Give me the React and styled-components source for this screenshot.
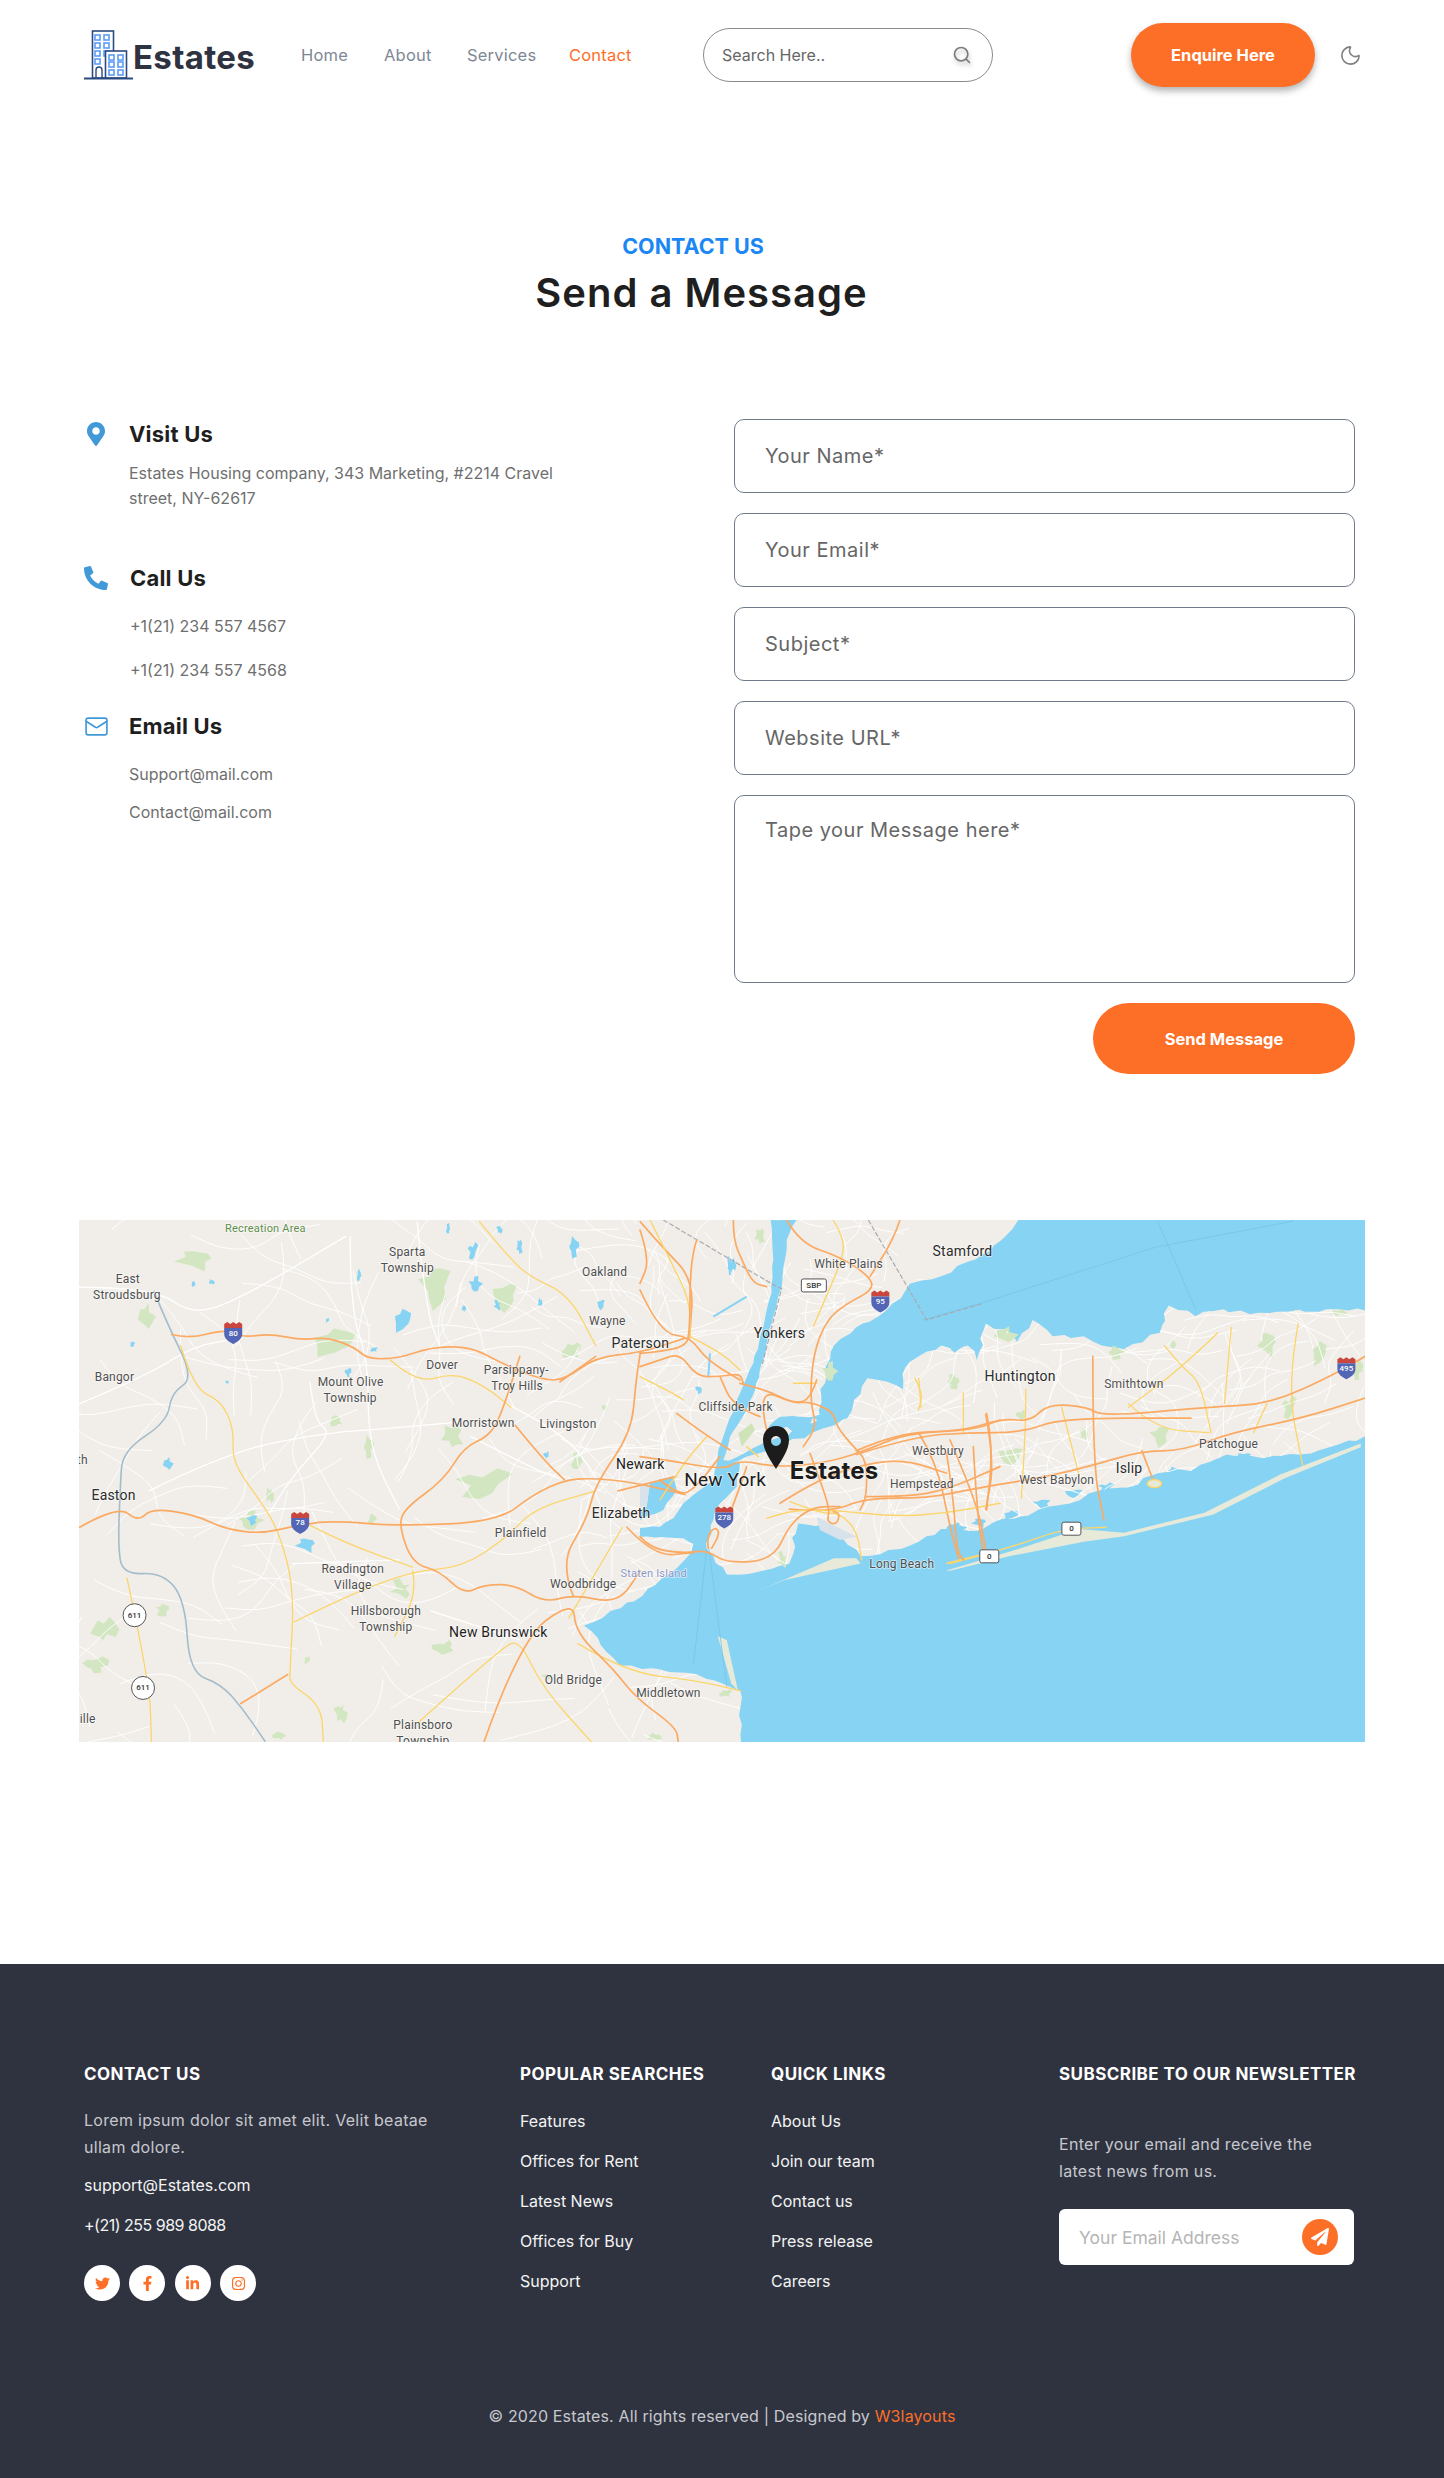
import styled, { createGlobalStyle } from "styled-components";
import { FaFacebookF, FaInstagram, FaLinkedinIn, FaMapMarkerAlt, FaPaperPlane, FaPhoneAlt, FaTwitter } from "react-icons/fa";
import { Mail, Moon, Search } from "lucide-react";

const ORANGE = "#fd6e27";
const LAND = "#f1eee9";
const WATER = "#86d3f4";
const GREEN = "#d3e6c2";
const ROAD_ORANGE = "#fbaa63";
const ROAD_YELLOW = "#fbd56c";

// map drawing: coordinates read off crops of the map (west half, east half, centre)
const WEST = "translate(-19 -20) scale(0.4464 0.3636)";
const EAST = "translate(621 -20) scale(0.4464 0.3636)";
const CENTRE = "translate(561 0) scale(0.3333)";
const fromWest = (x, y) => [x * 0.4464 - 19, y * 0.3636 - 20];
const fromEast = (x, y) => [x * 0.4464 + 621, y * 0.3636 - 20];

const noise = (i) => {
  const v = Math.sin(i * 12.9898 + 4.1) * 43758.5453;
  return (v - Math.floor(v)) * 2 - 1;
};
const points = (d) => d.match(/-?\d+,-?\d+/g).map((s) => s.split(",").map(Number));

// a road: round the corners of a polyline
const smooth = (d) => {
  const p = points(d);
  let out = `M${p[0]}`;
  for (let i = 1; i < p.length - 1; i++) {
    out += ` Q${p[i]} ${(p[i][0] + p[i + 1][0]) / 2},${(p[i][1] + p[i + 1][1]) / 2}`;
  }
  return out + ` L${p[p.length - 1]}`;
};

// a coast: break long sides into small uneven bits
const coast = (d, amp = 7, seed = 1) => {
  const p = points(d);
  let out = "";
  let k = seed * 100;
  p.forEach((a, i) => {
    const b = p[(i + 1) % p.length];
    const n = Math.max(1, Math.round(Math.hypot(b[0] - a[0], b[1] - a[1]) / 22));
    for (let j = 0; j < n; j++) {
      k += 1;
      const off = j === 0 ? 0 : amp;
      const x = a[0] + ((b[0] - a[0]) * j) / n + noise(k) * off;
      const y = a[1] + ((b[1] - a[1]) * j) / n + noise(k + 0.5) * off;
      out += `${out ? "L" : "M"}${x.toFixed(1)},${y.toFixed(1)} `;
    }
  });
  return out + "Z";
};

const blob = ([cx, cy, rx, ry], seed) => {
  let out = "";
  for (let i = 0; i < 11; i++) {
    const t = (i / 11) * Math.PI * 2;
    const r = 0.72 + 0.42 * noise(seed * 7 + i);
    const x = cx + Math.cos(t) * rx * r;
    const y = cy + Math.sin(t) * ry * r;
    out += `${i ? "L" : "M"}${x.toFixed(1)},${y.toFixed(1)} `;
  }
  return out + "Z";
};

const minorRoads = (count, [x0, y0, x1, y1], seed, step = 80) => {
  const list = [];
  for (let i = 0; i < count; i++) {
    let x = x0 + ((noise(seed + i * 3) + 1) / 2) * (x1 - x0);
    let y = y0 + ((noise(seed + i * 5 + 1) + 1) / 2) * (y1 - y0);
    let heading = noise(seed + i * 7 + 2) * Math.PI;
    let d = `M${Math.round(x)},${Math.round(y)}`;
    for (let s = 0; s < 4; s++) {
      heading += noise(seed + i + s * 11) * 0.8;
      x += Math.cos(heading) * step;
      y += Math.sin(heading) * step;
      d += ` L${Math.round(x)},${Math.round(y)}`;
    }
    list.push(d);
  }
  return list;
};

const waterShape = coast(
  "M760,-20 L1580,-20 L1580,1580 L90,1580 L90,1350 L-30,1300 L-130,1290 L-180,1280 L-260,1170 L-200,1130 L-130,1090 L-50,1010 L-20,970 L0,900 L10,830 L40,790 L60,720 L270,600 L270,520 L300,400 L350,350 L400,320 L450,270 L470,230 L540,210 L600,170 L650,140 L700,80",
  5,
  2
);
const longIsland = coast(
  "M30,880 L50,790 L65,720 L150,690 L250,640 L300,620 L330,600 L345,550 L375,490 L420,500 L455,520 L460,460 L490,430 L540,400 L570,420 L600,400 L620,440 L640,340 L700,370 L710,390 L745,330 L790,375 L860,375 L900,400 L950,410 L1030,365 L1050,290 L1110,320 L1150,305 L1250,310 L1580,300 L1580,620 L1410,680 L1340,700 L1260,710 L1180,700 L1100,745 L1030,750 L960,790 L890,800 L800,840 L720,870 L660,885 L620,910 L540,905 L450,960 L360,980 L300,900 L220,890 L200,1000 L140,1020 L60,1030 L30,980 L15,960",
  6,
  3
);
const barrierIslands = [
  "M130,1075 L300,985 L350,985 L360,1000 L190,1045 Z",
  "M550,1020 L700,965 L850,905 L950,915 L1130,860 L1300,755 L1480,670 L1480,680 L1310,765 L1150,865 L950,925 L860,940 L700,978 L560,1020 Z",
  "M40,1200 L60,1210 L85,1350 L70,1330 Z",
];
const centreWater = [
  "M392,0 L470,0 L440,60 L425,200 L395,310 L365,430 L345,510 L320,570 L270,650 L250,720 L300,725 L290,800 L240,850 L215,880 L205,950 L175,1000 L200,1080 L130,1080 L190,990 L130,955 L0,950 L0,925 L60,920 L100,895 L130,850 L180,810 L222,780 L235,690 L260,620 L300,520 L340,430 L370,320 L395,220 L400,120 Z",
  "M385,620 L420,590 L480,590 L520,590 L500,640 L470,640 L440,620 L400,640 Z",
  "M520,590 L575,575 L590,600 L540,610 Z",
  "M30,790 L100,770 L110,810 L70,870 L0,900 L0,870 L20,860 Z",
];
const southBays = [
  [570, 900, 26, 16], [625, 885, 24, 18], [700, 865, 22, 16], [765, 835, 24, 16], [840, 805, 22, 14], [910, 790, 20, 14], [1060, 745, 20, 10], [1220, 705, 20, 10],
];

const westOrange = [
  "M250,370 L290,382 L370,355 L410,378 L470,368 L540,385 L600,378 L660,405 L690,438 L760,435 L830,405 L920,403 L990,450 L1080,495 L1130,495 L1200,432 L1300,420 L1400,380",
  "M44,900 L130,840 L175,885 L205,848 L300,865 L370,905 L450,918 L530,895 L610,882 L760,897 L980,885 L1060,810 L1130,770 L1190,765 L1280,775 L1400,810",
  "M1030,430 L990,590 L960,650 L905,680 L860,770 L770,850 L760,900 L790,1000 L850,1020 L905,1085 L950,1058 L1020,1058 L1085,1108 L1150,1085 L1250,1110 L1300,1020",
  "M1150,1090 L1120,1000 L1180,880 L1200,780 L1280,640 L1290,500 L1300,420",
  "M950,1490 L1030,1210 L1150,1100 L1155,1190 L1240,1290 L1290,1370 L1380,1450 L1385,1490",
  "M1020,620 L1080,710 L1130,770",
  "M405,1385 L510,1305",
  "M1300,60 L1350,130 L1420,220 L1410,380",
  "M1250,800 L1380,760",
  "M1270,900 L1330,980 L1420,970",
  "M1120,500 L1200,430",
];
const westYellow = [
  "M270,400 L300,520 L360,550 L390,630 L385,720 L450,830 L490,910 L525,1070 L515,1300 L515,1330 L585,1390 L590,1490",
  "M525,1160 L640,1090 L790,1020 L900,1010 L1000,930 L1060,850 L1200,800",
  "M740,440 L800,505 L880,475 L950,510 L1010,570",
  "M560,895 L640,945 L790,1010",
  "M790,1020 L800,1080 L750,1200",
  "M940,60 L1000,150 L1050,210 L1140,260 L1200,400",
  "M800,1440 L990,1230 L1030,1210 L1080,1340 L1190,1490",
  "M150,1040 L200,1320 L205,1490",
  "M1140,1150 L1260,900",
  "M1160,1220 L1270,1300 L1420,1320 L1525,1350",
];
const westWhite = [
  "M44,240 L210,240 L300,320 L420,260 L640,100",
  "M44,560 L200,480 L300,400 L410,380",
  "M200,800 L380,690 L600,640 L720,630 L900,610",
  "M650,100 L650,300 L690,440 L690,620 L710,730 L760,850",
  "M560,500 L570,610 L610,640 L520,760 L470,860",
  "M800,60 L820,300 L850,400",
  "M920,650 L1060,740 L1130,770",
  "M1000,560 L1130,640 L1200,760",
  "M520,1000 L760,990",
  "M830,1130 L1030,1210",
];
const eastOrange = [
  "M350,690 L440,640 L590,635 L680,600 L740,610 L780,560 L870,570 L900,595 L1140,570 L1280,560 L1420,480 L1490,430",
  "M350,700 L480,650 L600,640 L720,640 L810,600 L1100,600",
  "M200,850 L290,860 L370,820 L510,820 L610,795 L780,760 L880,730 L990,690 L1080,690 L1190,640 L1350,600 L1490,545",
  "M880,430 L880,730 L905,880",
  "M640,590 L660,720 L640,850",
  "M490,640 L530,720 L560,900 L580,990",
  "M560,660 L620,830 L640,960",
  "M990,690 L1015,770",
];
const eastYellow = [
  "M590,530 L590,640",
  "M490,490 L495,570",
  "M730,520 L730,620 L720,820",
  "M810,570 L850,760",
  "M1040,400 L1080,460 L1120,500 L1145,640",
  "M1190,350 L1175,560",
  "M1340,340 L1315,510 L1350,730",
  "M960,560 L1020,630 L1140,640",
  "M1160,365 L1080,460 L960,570",
  "M1240,640 L1270,560",
  "M560,1000 L700,955 L810,905 L910,900",
];
const centreOrange = [
  "M170,60 L150,120 L150,350 L130,380 L60,395 L0,400",
  "M0,210 L60,340 L150,350 L200,420 L300,480",
  "M280,0 L280,60 L310,130 L340,190 L380,200",
  "M440,0 L480,70 L600,110 L690,170 L700,210 L620,250 L560,300 L520,400 L510,540 L530,620 L490,680",
  "M780,0 L760,60 L690,170",
  "M300,490 L380,510 L460,550 L510,545 L580,575 L590,620 L640,680 L680,720 L680,830 L660,870",
  "M0,440 L60,420 L120,400 L170,470 L240,470 L300,460 L310,490",
  "M110,580 L190,640 L270,690",
  "M0,710 L80,720 L250,750 L300,720 L400,740 L500,735 L590,720 L680,690 L800,640 L1000,630 L1080,600",
  "M60,780 L120,830 L170,800 L240,710",
  "M530,480 L510,540 L460,550 L370,510 L370,600 L400,690",
  "M510,700 L540,780 L570,870 L560,905 L590,915 L600,880 L580,875",
  "M0,950 L30,985 L130,1000 L200,990 L260,1030 L400,1020 L450,910 L520,860 L600,860",
  "M270,880 L300,800 L320,740",
  "M205,985 L200,950 L225,920 L240,940 L215,985",
  "M420,850 L530,780 L680,730 L800,720 L920,760",
  "M680,830 L800,830 L920,810 L1080,740",
  "M920,700 L940,830 L950,990 L970,1020",
  "M1040,580 L1060,680 L1040,870",
  "M1000,680 L1010,860 L1030,1000",
  "M0,30 L30,120 L0,190",
  "M360,590 L280,560 L240,470",
];
const centreYellow = [
  "M380,895 L450,870 L580,870 L760,890 L920,880 L1080,850",
  "M450,845 L540,880 L600,880 L650,930 L665,1020",
  "M150,350 L240,395 L300,450",
  "M30,0 L90,120 L150,240 L150,350",
  "M580,0 L610,50 L610,110 L550,250 L520,320",
  "M825,475 L850,520 L835,570",
  "M460,490 L530,490",
  "M920,1030 L1020,1005",
  "M0,470 L100,520 L130,540",
  "M320,680 L355,710",
  "M60,840 L130,730 L200,650",
];
const centreBlueLines = ["M220,290 L270,260 L320,230", "M265,110 L270,165", "M210,400 L205,470"];
const westGreen = [
  [190, 320, 22, 40], [300, 160, 60, 40], [620, 390, 60, 50], [840, 240, 40, 80], [1000, 260, 30, 50],
  [950, 780, 70, 45], [690, 680, 18, 30], [880, 650, 25, 35], [425, 880, 30, 30], [765, 1070, 28, 30],
  [100, 1180, 30, 40], [80, 1280, 35, 25], [230, 1125, 18, 20], [860, 1230, 35, 25], [1150, 410, 30, 30],
  [1160, 720, 18, 30], [630, 1410, 16, 35], [490, 1475, 25, 14], [1330, 1475, 25, 14], [620, 610, 20, 18],
  [470, 810, 10, 30], [700, 880, 10, 16], [1090, 1310, 14, 10], [555, 1265, 10, 14], [1220, 570, 8, 14],
];
const eastGreen = [
  [680, 370, 30, 25], [1270, 390, 30, 50], [1390, 420, 20, 45], [1030, 650, 25, 40], [700, 700, 30, 30],
  [1320, 570, 18, 35], [930, 420, 30, 18], [135, 100, 12, 25], [290, 470, 18, 30], [185, 990, 14, 25],
  [1430, 310, 18, 12], [1470, 470, 18, 30], [570, 500, 14, 20], [720, 590, 16, 18], [60, 1355, 20, 14],
  [565, 495, 12, 18], [860, 640, 10, 24], [1060, 400, 10, 18],
];
const westLakes = [
  [240, 725, 13, 20], [550, 945, 32, 28], [770, 330, 24, 42], [430, 880, 14, 20], [1213, 285, 9, 18],
  [925, 140, 13, 26], [1150, 130, 18, 28], [1030, 130, 7, 24], [930, 230, 16, 24], [980, 290, 10, 16],
  [1505, 180, 9, 26], [645, 475, 9, 14], [162, 395, 7, 8], [1090, 700, 9, 12], [705, 410, 11, 9],
  [870, 80, 6, 18], [985, 80, 7, 16], [905, 300, 8, 12], [1075, 280, 8, 16], [300, 232, 7, 9], [340, 225, 7, 10],
  [670, 210, 5, 20], [1430, 520, 8, 16], [600, 330, 6, 8], [375, 500, 5, 8],
];
const labelsWest = [
  ["Recreation Area", 460, 78, 11, "#5f8f4e"], ["Sparta", 778, 143, 12], ["Township", 778, 186, 12],
  ["East", 152, 218, 12], ["Stroudsburg", 150, 262, 12], ["Oakland", 1220, 198, 12], ["Wayne", 1226, 333, 12],
  ["Paterson", 1300, 393, 14, "#2b2b2b"], ["Bangor", 122, 488, 12], ["Dover", 856, 453, 12],
  ["Parsippany-", 1022, 468, 12], ["Troy Hills", 1024, 511, 12], ["Mount Olive", 651, 501, 12],
  ["Township", 650, 545, 12], ["Morristown", 948, 614, 12], ["Livingston", 1138, 617, 12],
  ["Newark", 1300, 727, 14, "#222"], ["New York", 1490, 770, 19, "#1d1d1d"], ["Easton", 120, 810, 14, "#2b2b2b"],
  ["Elizabeth", 1257, 860, 14, "#2b2b2b"], ["Plainfield", 1032, 915, 12], ["Readington", 656, 1014, 12],
  ["Village", 656, 1058, 12], ["Hillsborough", 730, 1130, 12], ["Township", 730, 1174, 12],
  ["Staten Island", 1330, 1028, 11, "#8b98c6"], ["Woodbridge", 1172, 1056, 12],
  ["New Brunswick", 982, 1187, 14, "#1f1f1f"], ["Old Bridge", 1150, 1320, 12], ["Middletown", 1363, 1356, 12],
  ["Plainsboro", 813, 1445, 12], ["Township", 813, 1488, 12], ["ille", 62, 1428, 12], ["th", 50, 715, 12],
];
const labelsEast = [
  ["Stamford", 588, 140, 14, "#2b2b2b"], ["White Plains", 333, 176, 12], ["Yonkers", 178, 366, 14, "#2b2b2b"],
  ["Huntington", 717, 484, 14, "#2b2b2b"], ["Smithtown", 972, 505, 12], ["Cliffside Park", 80, 568, 12],
  ["Westbury", 533, 690, 12], ["Hempstead", 497, 781, 12], ["West Babylon", 799, 770, 12],
  ["Islip", 961, 738, 14, "#2b2b2b"], ["Patchogue", 1184, 672, 12], ["Long Beach", 452, 1000, 12],
];
const interstates = [
  ["80", ...fromWest(388, 366)], ["78", ...fromWest(538, 888)], ["278", ...fromWest(1488, 873)],
  ["95", ...fromEast(404, 279)], ["495", ...fromEast(1448, 463)],
];
const plates = [["SBP", ...fromEast(255, 235), 25], ["0", ...fromEast(648, 980), 19], ["0", ...fromEast(832, 904), 19]];
const circles = [fromWest(167, 1142), fromWest(186, 1342)];

const footerLinks = {
  popular: ["Features", "Offices for Rent", "Latest News", "Offices for Buy", "Support"],
  quick: ["About Us", "Join our team", "Contact us", "Press release", "Careers"],
};

const GlobalStyle = createGlobalStyle`
  html, body {
    margin: 0;
    padding: 0;
    background: #fff;
    font-family: Inter, "Liberation Sans", sans-serif;
  }
  * {
    box-sizing: border-box;
  }
`;

const Page = styled.div`
  width: 1444px;
`;

const Header = styled.header`
  height: 110px;
  display: flex;
  align-items: center;
  padding: 0 82px 0 84px;
`;

const Brand = styled.a`
  width: 217px;
  display: flex;
  align-items: center;
  height: 50px;
`;

const BrandName = styled.span`
  font-size: 33px;
  font-weight: 700;
  color: #2f3341;
  letter-spacing: 0.3px;
  margin: 4px 0 0 -1px;
`;

const Nav = styled.nav`
  width: 402px;
  display: grid;
  grid-template-columns: 83px 83px 102px auto;
`;

const NavLink = styled.a`
  font-size: 16.5px;
  letter-spacing: 0.2px;
  color: ${(p) => (p.$active ? ORANGE : "#7e8794")};
`;

const SearchBox = styled.div`
  width: 290px;
  height: 54px;
  border: 1px solid #8b8b8b;
  border-radius: 27px;
  display: flex;
  align-items: center;
  justify-content: space-between;
  padding: 0 20px 0 18px;
  color: #666;
  font-size: 16px;

  svg {
    filter: drop-shadow(1px 3px 2px rgba(0, 0, 0, 0.25));
  }
`;

const EnquireBtn = styled.a`
  width: 184px;
  height: 64px;
  margin-left: 138px;
  background: ${ORANGE};
  border-radius: 32px;
  color: #fff;
  font-size: 16.5px;
  font-weight: 700;
  display: flex;
  align-items: center;
  justify-content: center;
  box-shadow: 0 4px 7px rgba(0, 0, 0, 0.3);
`;

const ThemeIcon = styled.span`
  margin-left: 24px;
  display: flex;
  color: #808080;
`;

const TitleBlock = styled.div`
  padding: 121px 125px 0 84px;
  text-align: center;
`;

const Eyebrow = styled.div`
  font-size: 21.5px;
  line-height: 30px;
  font-weight: 700;
  color: #1a87f5;
  margin-right: 17px;
`;

const Title = styled.h1`
  margin: 7px 0 0;
  font-size: 40px;
  line-height: 50px;
  font-weight: 600;
  color: #1f1f1f;
  letter-spacing: 1px;
`;

const ContactGrid = styled.section`
  display: grid;
  grid-template-columns: 650px 621px;
  padding: 0 0 0 84px;
  margin-top: 101px;
`;

const InfoBlock = styled.div`
  display: grid;
  grid-template-columns: 45px 1fr;
  margin-bottom: ${(p) => p.$gap}px;
`;

const InfoIcon = styled.div`
  height: 30px;
  display: flex;
  align-items: center;
  color: #4299d8;
`;

const InfoBody = styled.div`
  padding-left: ${(p) => p.$shift || 0}px;
`;

const InfoTitle = styled.h3`
  margin: 0;
  font-size: 22px;
  line-height: 30px;
  font-weight: 700;
  letter-spacing: 0.2px;
  color: #1f1f1f;
`;

const InfoText = styled.p`
  margin: ${(p) => p.$top}px 0 0;
  max-width: 450px;
  font-size: 16px;
  line-height: ${(p) => p.$line || 24}px;
  color: #6f6f6f;
`;

const Form = styled.form`
  display: flex;
  flex-direction: column;
  gap: 20px;
`;

const Field = styled.input`
  height: 74px;
  border: 1px solid #6f7b8c;
  border-radius: 10px;
  padding: 0 30px;
  font: 20px Inter, sans-serif;
  letter-spacing: 0.5px;
  outline: none;

  &::placeholder {
    color: #666;
    opacity: 1;
  }
`;

const MessageField = styled.textarea`
  height: 188px;
  border: 1px solid #6f7b8c;
  border-radius: 10px;
  padding: 22px 30px;
  font: 20px/24px Inter, sans-serif;
  letter-spacing: 0.5px;
  resize: none;
  outline: none;

  &::placeholder {
    color: #666;
    opacity: 1;
  }
`;

const SendBtn = styled.button`
  align-self: flex-end;
  width: 262px;
  height: 71px;
  border: none;
  border-radius: 36px;
  background: ${ORANGE};
  color: #fff;
  font: 700 16.5px Inter, sans-serif;
`;

const MapFrame = styled.section`
  margin: 146px 79px 0;
  height: 522px;
  background: ${LAND};
  overflow: hidden;

  svg {
    display: block;
  }
`;

const MapLabel = styled.text`
  font-family: Roboto, sans-serif;
  text-anchor: middle;
  dominant-baseline: central;
  letter-spacing: 0.2px;
  paint-order: stroke;
  stroke: rgba(255, 255, 255, 0.6);
  stroke-width: 1.5px;
`;

const PinLabel = styled(MapLabel)`
  font-family: Inter, sans-serif;
  font-size: 24px;
  font-weight: 700;
`;

const ShieldNumber = styled.text`
  font-family: Roboto, sans-serif;
  font-size: 8px;
  font-weight: 500;
  text-anchor: middle;
  dominant-baseline: central;
`;

const Footer = styled.footer`
  margin-top: 222px;
  height: 514px;
  background: #2f3340;
  padding: 97px 0 0 84px;
`;

const FooterGrid = styled.div`
  display: grid;
  grid-template-columns: 436px 251px 288px 295px;
  height: 240px;
`;

const FooterTitle = styled.h4`
  margin: 0;
  font-size: 17px;
  line-height: 26px;
  font-weight: 700;
  letter-spacing: 0.45px;
  color: #fff;
  white-space: nowrap;
`;

const FooterText = styled.p`
  margin: ${(p) => p.$top}px 0 0;
  font-size: 16px;
  letter-spacing: 0.3px;
  line-height: 27px;
  color: #c6c8cd;
  max-width: ${(p) => p.$max}px;
`;

const FooterLine = styled.div`
  margin-top: ${(p) => p.$top}px;
  font-size: 16px;
  letter-spacing: ${(p) => p.$spacing || 0}px;
  line-height: 24px;
  color: #f3f3f3;
`;

const Socials = styled.div`
  display: flex;
  gap: 9.4px;
  margin-top: 28px;
`;

const SocialLink = styled.a`
  width: 36px;
  height: 36px;
  border-radius: 50%;
  background: #fff;
  color: ${ORANGE};
  display: flex;
  align-items: center;
  justify-content: center;
  font-size: 15px;
`;

const LinkList = styled.ul`
  list-style: none;
  margin: 22px 0 0;
  padding: 0;
  display: flex;
  flex-direction: column;
  gap: 16px;
`;

const LinkItem = styled.li`
  font-size: 16px;
  line-height: 24px;
  color: #f3f3f3;
`;

const SubscribeBox = styled.div`
  width: 295px;
  height: 56px;
  margin-top: 24px;
  background: #fff;
  border-radius: 6px;
  display: flex;
  align-items: center;
  justify-content: space-between;
  padding: 0 16px 0 20px;
  color: #b5b5b5;
  font-size: 17.5px;
`;

const SubscribeBtn = styled.span`
  width: 36px;
  height: 36px;
  border-radius: 50%;
  background: ${ORANGE};
  color: #fff;
  display: flex;
  align-items: center;
  justify-content: center;
  font-size: 18px;
`;

const Copyright = styled.div`
  margin: 103px 0 0 -84px;
  text-align: center;
  font-size: 16px;
  letter-spacing: 0.15px;
  line-height: 24px;
  color: #c6c8cd;

  a {
    color: ${ORANGE};
  }
`;

const Logo = () => (
  <svg width="50" height="50" viewBox="0 0 50 50" fill="none">
    <rect x="8.5" y="1" width="21" height="47" stroke="#2b4a80" strokeWidth="1.6" fill="#fff" />
    {[5, 13, 21, 29].map((y) =>
      [11, 20].map((x) =>
        y > 21 && x > 15 ? null : (
          <rect key={x + "-" + y} x={x} y={y} width="5" height="5" stroke="#5b9bf5" strokeWidth="1.6" />
        )
      )
    )}
    <rect x="21.5" y="21" width="21" height="27" stroke="#2b4a80" strokeWidth="1.6" fill="#fff" />
    {[25, 32, 40].map((y) =>
      [25, 34].map((x) => (
        <rect key={x + "-" + y} x={x} y={y} width="5" height="5" stroke="#5b9bf5" strokeWidth="1.6" />
      ))
    )}
    <path d="M12 48 V40 a3 3 0 0 1 6 0 V48" stroke="#2b4a80" strokeWidth="1.4" />
    <path d="M0 48.5 H49" stroke="#2b4a80" strokeWidth="1.8" />
  </svg>
);

const Roads = ({ list, color, width }) => (
  <g fill="none" stroke={color} strokeWidth={width} strokeLinejoin="round" strokeLinecap="round">
    {list.map((d, i) => (
      <path key={i} d={smooth(d)} vectorEffect="non-scaling-stroke" />
    ))}
  </g>
);

const Blobs = ({ list, color }) => (
  <g fill={color}>
    {list.map((item, i) => (
      <path key={i} d={blob(item, i + 1)} />
    ))}
  </g>
);

const Labels = ({ list, place }) =>
  list.map(([text, x, y, size, color]) => {
    const [px, py] = place(x, y);
    return (
      <MapLabel key={text + x} x={px} y={py} fontSize={size} fill={color || "#4f4f4f"}>
        {text}
      </MapLabel>
    );
  });

const CityMap = () => (
  <svg width="1286" height="522" viewBox="0 0 1286 522">
    <defs>
      <clipPath id="long-island">
        <path d={longIsland} transform={EAST} />
      </clipPath>
    </defs>

    <g transform={WEST}>
      <Blobs list={westGreen} color={GREEN} />
      <Roads list={minorRoads(130, [44, 58, 1700, 1490], 3)} color="#fff" width={0.9} />
      <Roads list={minorRoads(150, [1150, 60, 1950, 1150], 17, 45)} color="#fff" width={0.9} />
      <Roads list={westWhite} color="#fff" width={1.3} />
      <Blobs list={westLakes} color={WATER} />
      <path
        d={smooth(
          "M210,250 L240,340 L300,490 L250,530 L240,610 L140,690 L135,790 L130,950 L140,1030 L230,1025 L280,1100 L290,1300 L360,1330 L410,1400 L460,1490"
        )}
        fill="none"
        stroke="#a3bccb"
        strokeWidth="1.6"
        vectorEffect="non-scaling-stroke"
      />
    </g>

    <g transform={EAST}>
      <path d={waterShape} fill={WATER} />
      <path d={longIsland} fill={LAND} />
      {barrierIslands.map((d) => (
        <path key={d} d={d} fill="#e8ead9" />
      ))}
      <Blobs list={eastGreen} color={GREEN} />
      <Blobs list={southBays} color={WATER} />
    </g>
    <g clipPath="url(#long-island)">
      <g transform={EAST}>
        <Roads list={minorRoads(220, [20, 300, 1490, 1000], 31, 55)} color="#fff" width={0.9} />
      </g>
    </g>

    <g transform={CENTRE}>
      {centreWater.map((d, i) => (
        <path key={i} d={coast(d, 3, i + 5)} fill={WATER} />
      ))}
      <path d="M0,790 L30,790 L20,860 L0,860 Z" fill="#d8e2ea" />
      <path d="M530,890 L590,920 L650,950 L600,960 L540,930 Z" fill="#d8e2ea" />
      <path d="M295,640 L335,610 L345,630 L305,680 Z" fill="#cfe3b8" />
      <g fill="none" stroke={WATER} strokeWidth="2">
        {centreBlueLines.map((d) => (
          <path key={d} d={smooth(d)} vectorEffect="non-scaling-stroke" />
        ))}
      </g>
    </g>

    <g transform={EAST} fill="none" stroke="#77c4e6" strokeWidth="0.8">
      <path d="M15,960 L-15,1280 M20,960 L60,1340 M500,330 L640,280 L1020,130 L1330,58 M1025,58 L1110,300" vectorEffect="non-scaling-stroke" />
    </g>
    <g transform={CENTRE} fill="none" stroke="#a9abb0" strokeWidth="1.2" strokeDasharray="5 2">
      <path d="M70,0 L410,200 L425,205 L365,440 M685,0 L790,180 L860,300 L1030,250" vectorEffect="non-scaling-stroke" />
    </g>

    <g transform={WEST}>
      <Roads list={westYellow} color={ROAD_YELLOW} width={1.3} />
      <Roads list={westOrange} color={ROAD_ORANGE} width={1.7} />
    </g>
    <g transform={EAST}>
      <Roads list={eastYellow} color={ROAD_YELLOW} width={1.3} />
      <Roads list={eastOrange} color={ROAD_ORANGE} width={1.7} />
      <ellipse cx="1018" cy="780" rx="16" ry="11" fill="#e8ead9" stroke={ROAD_YELLOW} strokeWidth="1.4" vectorEffect="non-scaling-stroke" />
    </g>
    <g transform={CENTRE}>
      <Roads list={centreYellow} color={ROAD_YELLOW} width={1.4} />
      <Roads list={centreOrange} color={ROAD_ORANGE} width={1.7} />
    </g>

    <Labels list={labelsWest} place={fromWest} />
    <Labels list={labelsEast} place={fromEast} />
    {interstates.map(([n, x, y]) => (
      <g key={n} transform={`translate(${x} ${y})`}>
        <path d="M-9,-9 L-6,-11 L-3,-9 L0,-11 L3,-9 L6,-11 L9,-9 L9,-5 L-9,-5 Z" fill="#c9463f" />
        <path d="M-9,-5 H9 V1 C9,6 4,9 0,11 C-4,9 -9,6 -9,1 Z" fill="#5266b5" />
        <ShieldNumber x="0" y="0" fill="#fff">
          {n}
        </ShieldNumber>
      </g>
    ))}
    {plates.map(([n, x, y, w]) => (
      <g key={x}>
        <rect x={x - w / 2} y={y - 6.5} width={w} height="13" rx="2" fill="#fff" stroke="#555" strokeWidth="1" />
        <ShieldNumber x={x} y={y} fill="#333">
          {n}
        </ShieldNumber>
      </g>
    ))}
    {circles.map(([x, y]) => (
      <g key={y}>
        <circle cx={x} cy={y} r="11.5" fill="#fff" stroke="#555" strokeWidth="1" />
        <ShieldNumber x={x} y={y} fill="#333">
          611
        </ShieldNumber>
      </g>
    ))}
    <path
      d="M697,206 C688,206 684,213 684,220 C684,230 692,241 697,249 C702,241 710,230 710,220 C710,213 706,206 697,206 Z M697,216 a5,5 0 1 0 0.01,0 Z"
      fill="#1c1c1c"
      fillRule="evenodd"
    />
    <PinLabel x="755" y="250" fill="#1c1c1c">
      Estates
    </PinLabel>
  </svg>
);

const App = () => (
  <Page>
    <GlobalStyle />
    <Header>
      <Brand>
        <Logo />
        <BrandName>Estates</BrandName>
      </Brand>
      <Nav>
        <NavLink>Home</NavLink>
        <NavLink>About</NavLink>
        <NavLink>Services</NavLink>
        <NavLink $active>Contact</NavLink>
      </Nav>
      <SearchBox>
        Search Here..
        <Search size={20} color="#7d7d7d" strokeWidth={2} />
      </SearchBox>
      <EnquireBtn>Enquire Here</EnquireBtn>
      <ThemeIcon>
        <Moon size={23} strokeWidth={1.7} />
      </ThemeIcon>
    </Header>

    <TitleBlock>
      <Eyebrow>CONTACT US</Eyebrow>
      <Title>Send a Message</Title>
    </TitleBlock>

    <ContactGrid>
      <div>
        <InfoBlock $gap={52}>
          <InfoIcon>
            <FaMapMarkerAlt size={24} />
          </InfoIcon>
          <InfoBody>
            <InfoTitle>Visit Us</InfoTitle>
            <InfoText $top={12} $line={25}>
              Estates Housing company, 343 Marketing, #2214 Cravel street, NY-62617
            </InfoText>
          </InfoBody>
        </InfoBlock>
        <InfoBlock $gap={29}>
          <InfoIcon>
            <FaPhoneAlt size={24} />
          </InfoIcon>
          <InfoBody $shift={1}>
            <InfoTitle>Call Us</InfoTitle>
            <InfoText $top={21}>+1(21) 234 557 4567</InfoText>
            <InfoText $top={20}>+1(21) 234 557 4568</InfoText>
          </InfoBody>
        </InfoBlock>
        <InfoBlock $gap={0}>
          <InfoIcon>
            <Mail size={25} strokeWidth={1.6} />
          </InfoIcon>
          <InfoBody>
            <InfoTitle>Email Us</InfoTitle>
            <InfoText $top={21}>Support@mail.com</InfoText>
            <InfoText $top={14}>Contact@mail.com</InfoText>
          </InfoBody>
        </InfoBlock>
      </div>
      <Form>
        <Field placeholder="Your Name*" />
        <Field placeholder="Your Email*" />
        <Field placeholder="Subject*" />
        <Field placeholder="Website URL*" />
        <MessageField placeholder="Tape your Message here*" />
        <SendBtn type="button">Send Message</SendBtn>
      </Form>
    </ContactGrid>

    <MapFrame>
      <CityMap />
    </MapFrame>

    <Footer>
      <FooterGrid>
        <div>
          <FooterTitle>CONTACT US</FooterTitle>
          <FooterText $top={20} $max={355}>
            Lorem ipsum dolor sit amet elit. Velit beatae ullam dolore.
          </FooterText>
          <FooterLine $top={12}>support@Estates.com</FooterLine>
          <FooterLine $top={16} $spacing={-0.5}>
            +(21) 255 989 8088
          </FooterLine>
          <Socials>
            <SocialLink>
              <FaTwitter />
            </SocialLink>
            <SocialLink>
              <FaFacebookF />
            </SocialLink>
            <SocialLink>
              <FaLinkedinIn />
            </SocialLink>
            <SocialLink>
              <FaInstagram />
            </SocialLink>
          </Socials>
        </div>
        <div>
          <FooterTitle>POPULAR SEARCHES</FooterTitle>
          <LinkList>
            {footerLinks.popular.map((item) => (
              <LinkItem key={item}>{item}</LinkItem>
            ))}
          </LinkList>
        </div>
        <div>
          <FooterTitle>QUICK LINKS</FooterTitle>
          <LinkList>
            {footerLinks.quick.map((item) => (
              <LinkItem key={item}>{item}</LinkItem>
            ))}
          </LinkList>
        </div>
        <div>
          <FooterTitle>SUBSCRIBE TO OUR NEWSLETTER</FooterTitle>
          <FooterText $top={44} $max={270}>
            Enter your email and receive the latest news from us.
          </FooterText>
          <SubscribeBox>
            Your Email Address
            <SubscribeBtn>
              <FaPaperPlane />
            </SubscribeBtn>
          </SubscribeBox>
        </div>
      </FooterGrid>
      <Copyright>
        © 2020 Estates. All rights reserved | Designed by <a>W3layouts</a>
      </Copyright>
    </Footer>
  </Page>
);

export default App;
